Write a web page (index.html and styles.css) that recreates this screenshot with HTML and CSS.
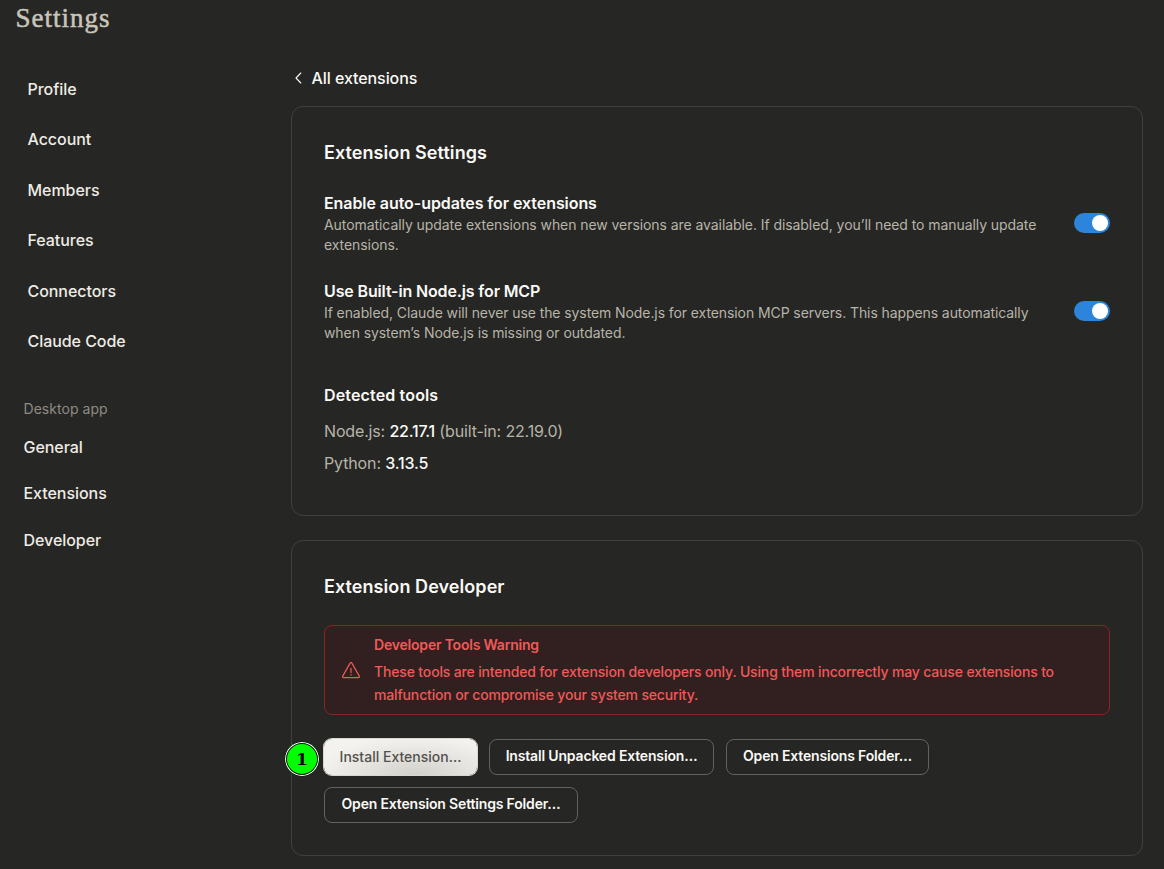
FILE: index.html
```html
<!DOCTYPE html>
<html lang="en">
<head>
<meta charset="utf-8">
<title>Settings</title>
<link rel="stylesheet" href="styles.css">
</head>
<body>
<div class="app">
  <aside class="sidebar">
    <h1 class="page-title">Settings</h1>
    <nav class="nav">
      <a class="nav-item">Profile</a>
      <a class="nav-item">Account</a>
      <a class="nav-item">Members</a>
      <a class="nav-item">Features</a>
      <a class="nav-item">Connectors</a>
      <a class="nav-item">Claude Code</a>
    </nav>
    <div class="nav-label"><span>Desktop app</span></div>
    <nav class="nav nav-desktop">
      <a class="nav-item">General</a>
      <a class="nav-item">Extensions</a>
      <a class="nav-item">Developer</a>
    </nav>
  </aside>
  <main class="content">
    <a class="back">
      <svg class="back-icon" width="8" height="12" viewBox="0 0 8 12" fill="none" stroke="currentColor" stroke-width="1.1" stroke-linecap="round" stroke-linejoin="round"><path d="M5.8 1 1 6l4.8 5"/></svg>
      <span>All extensions</span>
    </a>
    <section class="card settings-card">
      <h2 class="card-title">Extension Settings</h2>
      <div class="option">
        <div class="option-text">
          <h3 class="option-title">Enable auto-updates for extensions</h3>
          <p class="option-desc">Automatically update extensions when new versions are available. If disabled, you’ll need to manually update<br>extensions.</p>
        </div>
        <span class="toggle"><span class="knob"></span></span>
      </div>
      <div class="option">
        <div class="option-text">
          <h3 class="option-title option-title-node">Use Built-in Node.js for MCP</h3>
          <p class="option-desc option-desc-node">If enabled, Claude will never use the system Node.js for extension MCP servers. This happens automatically<br>when system’s Node.js is missing or outdated.</p>
        </div>
        <span class="toggle"><span class="knob"></span></span>
      </div>
      <div class="tools">
        <h3 class="tools-title">Detected tools</h3>
        <p class="tool tool-node">Node.js: <b>22.17.1</b> (built-in: 22.19.0)</p>
        <p class="tool tool-python">Python: <b>3.13.5</b></p>
      </div>
    </section>
    <section class="card dev-card">
      <h2 class="card-title">Extension Developer</h2>
      <div class="alert">
        <svg class="alert-icon" width="18" height="17" viewBox="0 0 18 17" fill="none" stroke="currentColor" stroke-width="1.2" stroke-linecap="round" stroke-linejoin="round"><path d="M8.1 1.1a1 1 0 0 1 1.8 0l7.4 13a1 1 0 0 1-.9 1.5H1.6a1 1 0 0 1-.9-1.5z"/><path d="M9 6.3v4.3M9 12.6v.5"/></svg>
        <div>
          <h3 class="alert-title">Developer Tools Warning</h3>
          <p class="alert-text">These tools are intended for extension developers only. Using them incorrectly may cause extensions to<br>malfunction or compromise your system security.</p>
        </div>
      </div>
      <div class="actions">
        <button class="btn btn-primary">Install Extension…<span class="step">1</span></button>
        <button class="btn btn-unpacked">Install Unpacked Extension…</button>
        <button class="btn btn-folder">Open Extensions Folder…</button>
        <button class="btn btn-settings">Open Extension Settings Folder…</button>
      </div>
    </section>
  </main>
</div>
</body>
</html>
```
FILE: styles.css
```css
* { box-sizing: border-box; margin: 0; }
body {
  background: #262624;
  color: #faf9f5;
  font-family: Inter, "Liberation Sans", sans-serif;
  font-size: 16px;
  white-space: nowrap;
}
.app { display: flex; width: 1164px; height: 869px; overflow: hidden; }

.sidebar { width: 291px; flex: none; padding-top: 2px; }
.page-title {
  padding-left: 15.5px;
  font: 400 27px/32px "Liberation Serif", serif;
  letter-spacing: 1px;
  color: #c9c5b9;
  -webkit-text-stroke: 0.5px #c9c5b9;
}
.nav { display: flex; flex-direction: column; padding: 30px 0 0 27.5px; }
.nav-item { height: 50.4px; line-height: 50.4px; font-weight: 500; color: #eeece5; letter-spacing: -0.05px; }
.nav-label { margin-top: 32.6px; padding-left: 23.5px; font-size: 14px; line-height: 20px; color: #8d8b83; letter-spacing: 0.05px; }
.nav-desktop { padding: 5px 0 0 23.5px; }
.nav-desktop .nav-item { height: 46.5px; line-height: 46.5px; }

.content { width: 852px; padding-top: 66px; }
.back { display: flex; align-items: center; gap: 8.5px; height: 24px; padding-left: 4px; font-weight: 500; letter-spacing: -0.07px; }
.card { border: 1px solid #40403d; border-radius: 12px; padding: 32px; }
.settings-card { height: 410px; margin-top: 16px; }
.dev-card { height: 316px; margin-top: 24px; }
.card-title { font-size: 18px; line-height: 28px; font-weight: 600; letter-spacing: 0.07px; }

.option { display: flex; justify-content: space-between; margin-top: 25px; height: 63px; }
.option-title { font-size: 16px; line-height: 23px; font-weight: 600; letter-spacing: -0.07px; }
.option-title-node { letter-spacing: -0.14px; }
.option-desc { font-size: 14px; line-height: 20px; color: #b7b4a8; letter-spacing: -0.07px; }
.option-desc-node { letter-spacing: -0.09px; }
.toggle { display: flex; justify-content: flex-end; width: 36px; height: 20px; margin-top: 21px; padding: 2px; border-radius: 10px; background: #2c84db; }
.knob { width: 16px; height: 16px; border-radius: 50%; background: #fff; }

.tools { display: flex; flex-direction: column; margin-top: 40px; line-height: 24px; }
.tools-title { font-size: 16px; font-weight: 600; letter-spacing: 0.15px; }
.tool { color: #b7b4a8; letter-spacing: -0.13px; }
.tool b { font-weight: 500; color: #faf9f5; letter-spacing: -0.2px; }
.tool-node { margin-top: 12px; letter-spacing: -0.16px; }
.tool-python { margin-top: 8px; }

.alert {
  display: flex; align-items: center; gap: 14px;
  height: 90px; margin-top: 24px; padding: 0 17px;
  border: 1px solid #8a2424; border-radius: 8px;
  background: #321f1f; color: #ee5a58; font-size: 14px;
}
.alert-icon { flex: none; }
.alert-title { font-size: 14px; line-height: 22px; font-weight: 600; letter-spacing: -0.2px; }
.alert-text { margin-top: 4px; line-height: 23px; font-weight: 500; letter-spacing: -0.155px; }

.actions { display: flex; flex-wrap: wrap; gap: 12px; margin-top: 24px; }
.btn {
  position: relative; height: 36px; padding: 0 0 2px;
  border: 1px solid #62625e; border-radius: 8px; background: none;
  color: #faf9f5; font: 600 14px/20px Inter, "Liberation Sans", sans-serif;
  letter-spacing: -0.17px; white-space: nowrap;
}
.btn-primary {
  width: 153px; padding: 0; border: 0; color: #52514d; font-weight: 500; letter-spacing: 0;
  background: radial-gradient(ellipse at 60% 100%, #d3d1cc, #f4f2ee 75%);
  box-shadow: 0 0 0 1px #d8d6d0;
}
.btn-unpacked { width: 225px; }
.btn-folder { width: 203px; }
.btn-settings { width: 254px; }
.step {
  position: absolute; left: -40px; top: 2px; width: 36px; height: 36px;
  border: 1px solid #161616; border-radius: 50%; background: #0f0;
  box-shadow: inset 0 0 0 1px #fff, inset 0 0 0 2px #111;
  color: #000; text-align: center; font: 700 17px/35px "DejaVu Serif", serif;
}
```
